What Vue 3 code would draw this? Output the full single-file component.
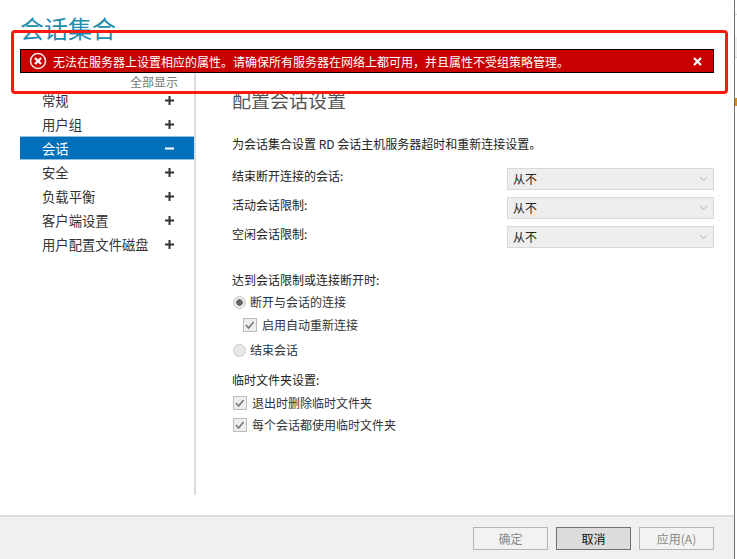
<script setup>
const nav = [
  { label: '常规' },
  { label: '用户组' },
  { label: '会话', active: true },
  { label: '安全' },
  { label: '负载平衡' },
  { label: '客户端设置' },
  { label: '用户配置文件磁盘' },
]
const limits = ['结束断开连接的会话:', '活动会话限制:', '空闲会话限制:']
const bannerText = '无法在服务器上设置相应的属性。请确保所有服务器在网络上都可用\uFF0C并且属性不受组策略管理。'
</script>

<template>
  <div class="page">
    <div class="window">
      <header class="title-bar">会话集合</header>
      <div class="body">
        <aside class="sidebar">
          <div class="show-all">全部显示</div>
          <div v-for="item in nav" :key="item.label" class="nav-row" :class="{ active: item.active }">
            <span>{{ item.label }}</span>
            <svg class="sign" width="9" height="9" viewBox="0 0 9 9">
              <rect x="0" y="3.5" width="9" height="2" fill="currentColor" />
              <rect v-if="!item.active" x="3.5" y="0" width="2" height="9" fill="currentColor" />
            </svg>
          </div>
        </aside>
        <main class="content">
          <h2 class="heading">配置会话设置</h2>
          <p class="desc">为会话集合设置 RD 会话主机服务器超时和重新连接设置。</p>
          <div class="limits">
            <div v-for="label in limits" :key="label" class="limit-row">
              <span>{{ label }}</span>
              <div class="select">
                <span>从不</span>
                <svg width="9" height="6" viewBox="0 0 9 6">
                  <path d="M1 1l3.5 3.5L8 1" fill="none" stroke="#c8c8c8" stroke-width="1.2" />
                </svg>
              </div>
            </div>
          </div>
          <div class="label section-a">达到会话限制或连接断开时:</div>
          <div class="option opt-1"><span class="radio on"></span>断开与会话的连接</div>
          <div class="option opt-2">
            <svg class="check" width="14" height="14" viewBox="0 0 14 14">
              <rect x=".5" y=".5" width="13" height="13" fill="#eee" stroke="#bcbcbc" />
              <path d="M3 7l2.6 3 5-6" fill="none" stroke="#777" stroke-width="1.6" />
            </svg>
            启用自动重新连接
          </div>
          <div class="option opt-3"><span class="radio"></span>结束会话</div>
          <div class="label section-b">临时文件夹设置:</div>
          <div class="option opt-4">
            <svg class="check" width="14" height="14" viewBox="0 0 14 14">
              <rect x=".5" y=".5" width="13" height="13" fill="#eee" stroke="#bcbcbc" />
              <path d="M3 7l2.6 3 5-6" fill="none" stroke="#777" stroke-width="1.6" />
            </svg>
            退出时删除临时文件夹
          </div>
          <div class="option opt-5">
            <svg class="check" width="14" height="14" viewBox="0 0 14 14">
              <rect x=".5" y=".5" width="13" height="13" fill="#eee" stroke="#bcbcbc" />
              <path d="M3 7l2.6 3 5-6" fill="none" stroke="#777" stroke-width="1.6" />
            </svg>
            每个会话都使用临时文件夹
          </div>
        </main>
      </div>
      <footer class="footer">
        <button class="btn" disabled>确定</button>
        <button class="btn primary">取消</button>
        <button class="btn" disabled>应用(A)</button>
      </footer>
    </div>
    <div class="desktop-edge"></div>

    <div class="banner">
      <svg class="err" width="18" height="18" viewBox="0 0 18 18">
        <circle cx="9" cy="9" r="7.5" fill="none" stroke="#fff" stroke-width="1.6" opacity=".9" />
        <path d="M6 6l6 6M12 6l-6 6" stroke="#fff" stroke-width="2.4" />
      </svg>
      <span class="banner-text">{{ bannerText }}</span>
      <svg class="close" width="9" height="9" viewBox="0 0 9 9">
        <path d="M1 1l7 7M8 1l-7 7" stroke="#fff" stroke-width="2.2" />
      </svg>
    </div>
    <div class="annotation"></div>
  </div>
</template>

<style>
body { margin: 0; background: #fff; }
</style>

<style scoped>
.page {
  position: relative;
  width: 737px;
  height: 559px;
  overflow: hidden;
  font-family: "Noto Sans CJK SC", "Liberation Sans", sans-serif;
  font-size: 12px;
  color: #222;
  background: #fff;
}
.window {
  display: flex;
  flex-direction: column;
  width: 734px;
  height: 559px;
  border-right: 1px solid #6d6d6d;
  background: #fff;
}
.desktop-edge {
  position: absolute;
  left: 735px;
  top: 0;
  width: 2px;
  height: 106px;
  background: linear-gradient(
    #fff 0 14px,
    #ccc 14px 15px,
    #fff 15px 37px,
    #f0f0f0 37px 57px,
    #ccc 57px 58px,
    #fff 58px 98px,
    #d98a1c 98px 106px
  );
}
.title-bar {
  height: 73px;
  box-sizing: border-box;
  padding: 10px 0 0 20px;
  font-size: 24px;
  line-height: 36px;
  color: #1f8cab;
}
.body {
  flex: 1;
  display: flex;
  min-height: 0;
}
.sidebar {
  width: 174px;
  height: 422px;
  margin-left: 20px;
  border-right: 2px solid #dcdcdc;
  font-size: 13.33px;
}
.show-all {
  height: 15px;
  padding-right: 16px;
  text-align: right;
  font-size: 12px;
  line-height: 18px;
  color: #777;
}
.nav-row {
  display: flex;
  align-items: center;
  justify-content: space-between;
  box-sizing: border-box;
  height: 24px;
  padding: 0 20px 0 22px;
  color: #333;
}
.nav-row.active {
  background: #0070bb;
  color: #fff;
  border-top: 1px solid #8fbfe0;
  border-bottom: 1px solid #8fbfe0;
}
.sign { color: #333; }
.active .sign { color: #fff; }
.content {
  flex: 1;
  padding-left: 36px;
  padding-right: 20px;
}
.heading {
  margin: 16px 0 0;
  font-size: 19px;
  font-weight: 400;
  line-height: 22px;
  color: #555;
}
.desc {
  margin: 24px 0 0;
  line-height: 18px;
}
.limits {
  margin-top: 11px;
}
.limit-row {
  display: flex;
  align-items: center;
  justify-content: space-between;
  height: 29px;
}
.limit-row > span { margin-top: -6px; }
.select {
  display: flex;
  align-items: center;
  justify-content: space-between;
  box-sizing: border-box;
  width: 207px;
  height: 22px;
  padding: 0 5px;
  border: 1px solid #d8d8d8;
  background: #eee;
}
.label, .option { line-height: 18px; }
.section-a { margin-top: 20px; }
.option {
  display: flex;
  align-items: center;
  color: #333;
}
.opt-1 { margin-top: 4px; }
.opt-2 { margin-top: 5px; padding-left: 10px; }
.opt-3 { margin-top: 7px; }
.section-b { margin-top: 12px; }
.opt-4 { margin-top: 5px; }
.opt-5 { margin-top: 4px; }
.radio {
  box-sizing: border-box;
  width: 13px;
  height: 13px;
  margin: 0 4px 0 1px;
  border: 1px solid #c9c9c9;
  border-radius: 50%;
  background: #e8e8e8;
}
.radio.on {
  background: radial-gradient(circle, #666 0 3px, #e8e8e8 3.5px);
}
.check { margin: 0 5px 0 1px; flex: none; }
.footer {
  display: flex;
  justify-content: flex-end;
  gap: 8px;
  box-sizing: border-box;
  height: 44px;
  padding: 10px 20px 0 0;
  border-top: 2px solid #dcdcdc;
  background: #f0f0f0;
}
.btn {
  box-sizing: border-box;
  width: 75px;
  height: 23px;
  padding: 0;
  border: 1px solid #b0b6ba;
  background: #f2f2f2;
  font: inherit;
  line-height: 20px;
  color: #888;
}
.btn.primary {
  border-color: #707070;
  background: #dcdcdc;
  color: #111;
}
.banner {
  position: absolute;
  left: 20px;
  top: 49px;
  display: flex;
  align-items: center;
  box-sizing: border-box;
  width: 694px;
  height: 24px;
  padding: 0 11px 0 8px;
  border: 1px solid #000;
  background: #c80000;
  color: #fff;
}
.err { flex: none; margin-right: 6px; }
.banner-text { flex: 1; white-space: nowrap; }
.annotation {
  position: absolute;
  left: 11px;
  top: 30px;
  box-sizing: border-box;
  width: 717px;
  height: 64px;
  border: 3px solid #fb1a10;
  border-radius: 4px;
}
</style>
